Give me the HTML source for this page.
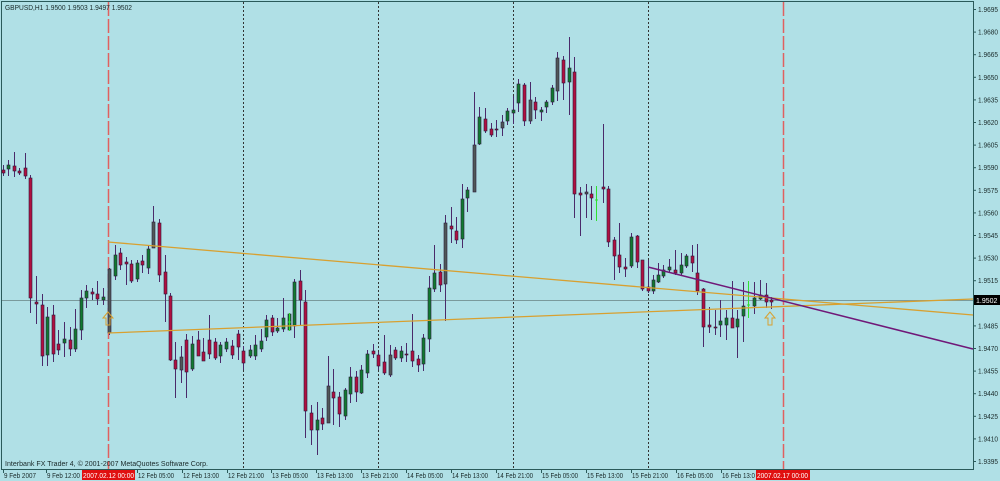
<!DOCTYPE html>
<html><head><meta charset="utf-8"><style>
html,body{margin:0;padding:0;background:#b0e0e6;width:1000px;height:481px;overflow:hidden}
svg{display:block}
text{font-family:"Liberation Sans",sans-serif;font-size:7px;fill:#1a2a2a}
</style></head><body>
<svg id="s" width="1000" height="481" xmlns="http://www.w3.org/2000/svg">
<rect x="0" y="0" width="1000" height="481" fill="#b0e0e6"/>
<rect x="1.5" y="1.5" width="972" height="468" fill="none" stroke="#2a5a5a" stroke-width="1"/>
<g stroke="#333" stroke-width="1" stroke-dasharray="2,2">
<line x1="243.5" y1="2" x2="243.5" y2="469"/><line x1="378.5" y1="2" x2="378.5" y2="469"/>
<line x1="513.5" y1="2" x2="513.5" y2="469"/><line x1="648.5" y1="2" x2="648.5" y2="469"/>
</g>
<g stroke="#e06060" stroke-width="1.5" stroke-dasharray="14,3">
<line x1="108.5" y1="2" x2="108.5" y2="469"/><line x1="783.5" y1="2" x2="783.5" y2="469"/>
</g>
<line x1="2" y1="300.5" x2="973" y2="300.5" stroke="#7a9a9c" stroke-width="1"/>
<g id="c"></g>
<line x1="108" y1="242" x2="973" y2="315" stroke="#d8a030" stroke-width="1.3"/>
<line x1="108" y1="333" x2="973" y2="299" stroke="#d8a030" stroke-width="1.3"/>
<line x1="648" y1="267" x2="973" y2="349" stroke="#701878" stroke-width="1.5"/>
<path d="M108 312 l-5 6 h3 v7 h4 v-7 h3 z" fill="none" stroke="#d8a030" stroke-width="1"/>
<path d="M770 312 l-5 6 h3 v7 h4 v-7 h3 z" fill="none" stroke="#d8a030" stroke-width="1"/>
<text x="5" y="10" textLength="127" lengthAdjust="spacingAndGlyphs">GBPUSD,H1  1.9500 1.9503 1.9497 1.9502</text>
<text x="5" y="466" textLength="203" lengthAdjust="spacingAndGlyphs">Interbank FX Trader 4, © 2001-2007 MetaQuotes Software Corp.</text>
<g id="ax"></g>
<rect x="974" y="295" width="26" height="10" fill="#000"/>
<text x="976" y="303" style="fill:#fff">1.9502</text>
<rect x="82" y="470" width="53" height="10" fill="#e01010"/>
<text x="83" y="478" style="fill:#fff" textLength="51" lengthAdjust="spacingAndGlyphs">2007.02.12 00:00</text>
<rect x="756" y="470" width="54" height="10" fill="#e01010"/>
<text x="757" y="478" style="fill:#fff" textLength="51" lengthAdjust="spacingAndGlyphs">2007.02.17 00:00</text>
<g id="tx"></g>
</svg>
<script>
var NS="http://www.w3.org/2000/svg";
function el(p,t,a,txt){var e=document.createElementNS(NS,t);for(var k in a)e.setAttribute(k,a[k]);if(txt)e.textContent=txt;p.appendChild(e);return e;}
var D=[
[3,170,173,165,176],[8,169,165,160,176],[14,166,171,152,177],[19,171,173,168,175],[25,168,176,153,179],[30,178,298,175,313],[36,302,304,276,324],[42,305,356,294,366],[47,355,317,307,366],[53,315,354,305,362],[58,344,350,330,355],[64,343,339,322,357],[70,340,349,327,356],[75,349,329,309,352],[81,330,298,290,340],[86,298,291,285,308],[92,292,294,288,300],[97,294,299,281,305],[103,300,297,288,305],[109,333,269,268,335,1],
[115,276,255,245,280],[120,253,265,248,270],[126,262,264,257,285],[131,264,281,260,283],[137,279,263,260,282],[142,261,265,255,273],[148,268,249,246,274],[153,248,222,206,248,1],[159,223,275,219,282],[165,272,294,255,322],[170,296,360,293,361],[175,360,369,342,398],[181,370,357,346,383,1],[186,340,372,334,398],[192,369,344,336,371],[198,340,356,331,356],[203,352,361,338,361],[209,340,354,315,359],[215,342,358,338,360],[220,356,345,342,363],[226,349,342,338,352],[232,346,355,340,359],[238,334,347,330,360],[243,351,363,346,370],
[250,356,350,345,358],[255,356,345,335,360],[261,349,341,329,352],[266,337,320,315,341],[272,318,332,315,336],[277,331,328,318,333],[283,329,318,298,332],[289,330,314,313,331],[294,326,282,279,338],[300,281,300,270,325],[305,302,411,290,438],[311,413,430,405,445],[317,430,420,402,455],[322,418,424,408,430],[328,423,386,356,423,1],[333,392,398,369,425],[339,397,414,392,427],[345,416,390,388,420],[350,394,377,367,403],[356,377,392,371,402],[361,393,370,365,394],[367,373,354,350,378],[373,351,354,344,358],[378,355,366,352,370],[384,362,373,335,375],[390,375,355,345,377,1],[395,350,358,347,360],[401,358,351,346,362],[406,354,355,343,362],[412,351,361,314,367],[418,359,365,355,372],[423,364,338,334,371],[429,339,288,276,352],[434,289,273,245,292],[440,272,285,264,292],[445,284,223,215,321,1],[451,226,229,207,243],[456,231,240,217,244],[462,239,199,184,248],[467,198,190,187,212],
[474,192,145,92,192,1],[479,144,117,107,145],[485,119,131,108,133],[491,129,135,123,137],[496,129,130,120,137],[502,128,122,115,136,1],[507,121,111,108,125],[513,113,110,96,124],[518,103,84,79,112],[524,85,121,83,126],[530,121,100,82,124,1],[535,102,110,97,119],[541,112,110,107,121],[546,107,102,100,113],[552,102,88,85,105],[557,91,58,52,101,1],[563,60,83,56,100],[569,82,68,37,115],[574,72,194,57,218],[580,193,195,187,236],[586,192,194,184,218,1],[591,194,198,186,220],[603,187,189,124,203],[608,189,242,186,247],[614,240,256,237,280],[619,255,267,223,273],[625,267,269,258,277],[631,266,237,233,268],[637,236,262,235,268],[642,260,289,260,291],[648,287,291,260,293],
[653,291,280,275,294],[658,282,275,263,283],[663,276,270,265,278],[669,270,267,259,272],[675,270,273,250,275],[681,273,265,253,275],[686,266,256,254,268],[692,256,263,245,272],[697,273,291,244,295],[703,289,327,288,347],[709,325,327,307,333],[715,327,328,310,335],[720,325,321,300,337],[726,325,318,310,340],[732,318,328,281,328],[737,327,319,310,358],[743,316,306,282,342],[754,306,298,282,314],[760,299,295,280,300],[766,295,302,283,308],[771,300,302,297,309]];
var g=document.getElementById("c");
D.forEach(function(d){var x=d[0],o=d[1],c=d[2],h=d[3],l=d[4];
el(g,"line",{x1:x+.5,y1:h,x2:x+.5,y2:l,stroke:"#4a2a6a","stroke-width":1});
var f=d[5]?"#505858":(c<o?"#107a30":"#b01040");
var t=Math.min(o,c),b=Math.max(o,c);if(b-t<1)b=t+1;
el(g,"rect",{x:x-1,y:t,width:3,height:b-t,fill:f,stroke:"#2a1a3a","stroke-width":.6});});
[[596,186,221,200],[748,281,318,305],[289,313,331,322]].forEach(function(d){el(g,"line",{x1:d[0]+.5,y1:d[1],x2:d[0]+.5,y2:d[2],stroke:"#30e030"});el(g,"line",{x1:d[0]-1,y1:d[3],x2:d[0]+2,y2:d[3],stroke:"#30e030"});});
var ax=document.getElementById("ax");
for(var i=0;i<21;i++){var p=1.9695-i*0.0015,y=9+i*22.6;if(y>465)break;
el(ax,"line",{x1:973,y1:y+.5,x2:976,y2:y+.5,stroke:"#2a5a5a"});
if(Math.abs(y-300)>6)el(ax,"text",{x:978,y:y+3,textLength:20,lengthAdjust:"spacingAndGlyphs"},p.toFixed(4));}
var tx=document.getElementById("tx");
[[3,"9 Feb 2007",32],[46,"9 Feb 12:00",33],[137,"12 Feb 05:00",36],[182,"12 Feb 13:00",36],[227,"12 Feb 21:00",36],[271,"13 Feb 05:00",36],[316,"13 Feb 13:00",36],[361,"13 Feb 21:00",36],[406,"14 Feb 05:00",36],[451,"14 Feb 13:00",36],[496,"14 Feb 21:00",36],[541,"15 Feb 05:00",36],[586,"15 Feb 13:00",36],[631,"15 Feb 21:00",36],[676,"16 Feb 05:00",36],[721,"16 Feb 13:0",33]].forEach(function(t){
el(tx,"line",{x1:t[0]+.5,y1:469,x2:t[0]+.5,y2:473,stroke:"#2a5a5a"});
el(tx,"text",{x:t[0]+1,y:478,textLength:t[2],lengthAdjust:"spacingAndGlyphs"},t[1]);});
</script>
</body></html>
